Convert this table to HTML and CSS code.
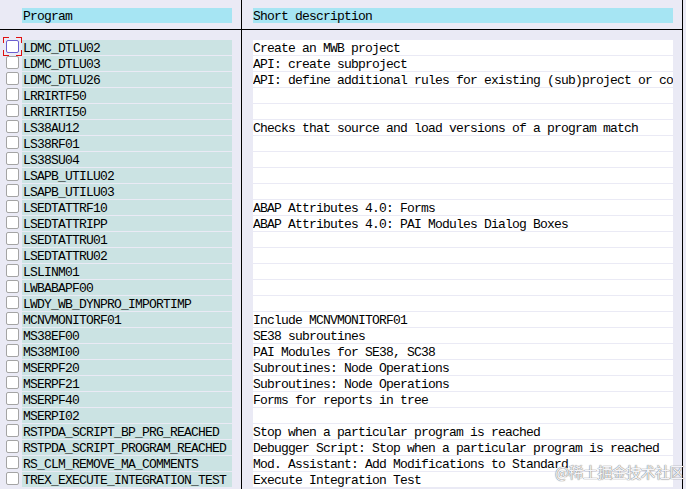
FILE: index.html
```html
<!DOCTYPE html>
<html>
<head>
<meta charset="utf-8">
<link rel="stylesheet" href="styles.css">
</head>
<body>
<div class="table">
  <div class="col col-prog">
    <div class="head"><div class="head-cell">Program</div></div>
    <div class="rows">
      <div class="row"><span class="cb focus"><span class="box"></span></span><span class="pcell">LDMC_DTLU02</span></div>
      <div class="row"><span class="cb"><span class="box"></span></span><span class="pcell">LDMC_DTLU03</span></div>
      <div class="row"><span class="cb"><span class="box"></span></span><span class="pcell">LDMC_DTLU26</span></div>
      <div class="row"><span class="cb"><span class="box"></span></span><span class="pcell">LRRIRTF50</span></div>
      <div class="row"><span class="cb"><span class="box"></span></span><span class="pcell">LRRIRTI50</span></div>
      <div class="row"><span class="cb"><span class="box"></span></span><span class="pcell">LS38AU12</span></div>
      <div class="row"><span class="cb"><span class="box"></span></span><span class="pcell">LS38RF01</span></div>
      <div class="row"><span class="cb"><span class="box"></span></span><span class="pcell">LS38SU04</span></div>
      <div class="row"><span class="cb"><span class="box"></span></span><span class="pcell">LSAPB_UTILU02</span></div>
      <div class="row"><span class="cb"><span class="box"></span></span><span class="pcell">LSAPB_UTILU03</span></div>
      <div class="row"><span class="cb"><span class="box"></span></span><span class="pcell">LSEDTATTRF10</span></div>
      <div class="row"><span class="cb"><span class="box"></span></span><span class="pcell">LSEDTATTRIPP</span></div>
      <div class="row"><span class="cb"><span class="box"></span></span><span class="pcell">LSEDTATTRU01</span></div>
      <div class="row"><span class="cb"><span class="box"></span></span><span class="pcell">LSEDTATTRU02</span></div>
      <div class="row"><span class="cb"><span class="box"></span></span><span class="pcell">LSLINM01</span></div>
      <div class="row"><span class="cb"><span class="box"></span></span><span class="pcell">LWBABAPF00</span></div>
      <div class="row"><span class="cb"><span class="box"></span></span><span class="pcell">LWDY_WB_DYNPRO_IMPORTIMP</span></div>
      <div class="row"><span class="cb"><span class="box"></span></span><span class="pcell">MCNVMONITORF01</span></div>
      <div class="row"><span class="cb"><span class="box"></span></span><span class="pcell">MS38EF00</span></div>
      <div class="row"><span class="cb"><span class="box"></span></span><span class="pcell">MS38MI00</span></div>
      <div class="row"><span class="cb"><span class="box"></span></span><span class="pcell">MSERPF20</span></div>
      <div class="row"><span class="cb"><span class="box"></span></span><span class="pcell">MSERPF21</span></div>
      <div class="row"><span class="cb"><span class="box"></span></span><span class="pcell">MSERPF40</span></div>
      <div class="row"><span class="cb"><span class="box"></span></span><span class="pcell">MSERPI02</span></div>
      <div class="row"><span class="cb"><span class="box"></span></span><span class="pcell">RSTPDA_SCRIPT_BP_PRG_REACHED</span></div>
      <div class="row"><span class="cb"><span class="box"></span></span><span class="pcell">RSTPDA_SCRIPT_PROGRAM_REACHED</span></div>
      <div class="row"><span class="cb"><span class="box"></span></span><span class="pcell">RS_CLM_REMOVE_MA_COMMENTS</span></div>
      <div class="row"><span class="cb"><span class="box"></span></span><span class="pcell">TREX_EXECUTE_INTEGRATION_TEST</span></div>
    </div>
  </div>
  <div class="col col-desc">
    <div class="head"><div class="head-cell">Short description</div></div>
    <div class="rows">
      <div class="drow">Create an MWB project</div>
      <div class="drow">API: create subproject</div>
      <div class="drow">API: define additional rules for existing (sub)project or collection</div>
      <div class="drow"></div>
      <div class="drow"></div>
      <div class="drow">Checks that source and load versions of a program match</div>
      <div class="drow"></div>
      <div class="drow"></div>
      <div class="drow"></div>
      <div class="drow"></div>
      <div class="drow">ABAP Attributes 4.0: Forms</div>
      <div class="drow">ABAP Attributes 4.0: PAI Modules Dialog Boxes</div>
      <div class="drow"></div>
      <div class="drow"></div>
      <div class="drow"></div>
      <div class="drow"></div>
      <div class="drow"></div>
      <div class="drow">Include MCNVMONITORF01</div>
      <div class="drow">SE38 subroutines</div>
      <div class="drow">PAI Modules for SE38, SC38</div>
      <div class="drow">Subroutines: Node Operations</div>
      <div class="drow">Subroutines: Node Operations</div>
      <div class="drow">Forms for reports in tree</div>
      <div class="drow"></div>
      <div class="drow">Stop when a particular program is reached</div>
      <div class="drow">Debugger Script: Stop when a particular program is reached</div>
      <div class="drow">Mod. Assistant: Add Modifications to Standard</div>
      <div class="drow">Execute Integration Test</div>
    </div>
  </div>
</div>
<div class="watermark">@稀土掘金技术社区</div>
</body>
</html>
```
FILE: styles.css
```css
html, body {
  margin: 0;
  padding: 0;
  height: 489px;
  overflow: hidden;
  background: #eaeaf5;
}
body {
  font-family: "Liberation Mono", "DejaVu Sans Mono", monospace;
  font-size: 13px;
  letter-spacing: -0.8px;
  color: #000;
  position: relative;
}
.table {
  display: grid;
  grid-template-columns: 242px 441px;
  height: 489px;
}
.col {
  border-right: 1px solid #000;
  box-sizing: border-box;
}
.head {
  border-bottom: 1px solid #000;
  padding-top: 8px;
  height: 21px;
}
.head-cell {
  height: 15px;
  line-height: 17px;
  background: #a6e5f3;
  white-space: nowrap;
  overflow: hidden;
}
.col-prog .head-cell {
  margin-left: 22px;
  width: 210px;
  padding-left: 1px;
  box-sizing: border-box;
}
.col-desc .head-cell {
  margin-left: 11px;
  width: 420px;
}
.rows {
  padding-top: 10px;
  display: flex;
  flex-direction: column;
  gap: 1px;
}
.row {
  display: grid;
  grid-template-columns: 22px 210px;
  height: 15px;
}
.cb {
  position: relative;
  display: block;
}
.box {
  display: block;
  width: 13px;
  height: 13px;
  margin-left: 6px;
  box-sizing: border-box;
  border: 1px solid #a4a4a4;
  border-radius: 2px;
  background: #fff;
}
.focus .box {
  border-color: #6b5fd0;
}
.focus::before {
  content: "";
  position: absolute;
  left: 3px;
  top: -3px;
  width: 19px;
  height: 19px;
  box-sizing: border-box;
  border: 1px solid #e01010;
  -webkit-mask:
    linear-gradient(#000,#000) left top / 6px 6px no-repeat,
    linear-gradient(#000,#000) right top / 6px 6px no-repeat,
    linear-gradient(#000,#000) left bottom / 6px 6px no-repeat,
    linear-gradient(#000,#000) right bottom / 6px 6px no-repeat;
  mask:
    linear-gradient(#000,#000) left top / 6px 6px no-repeat,
    linear-gradient(#000,#000) right top / 6px 6px no-repeat,
    linear-gradient(#000,#000) left bottom / 6px 6px no-repeat,
    linear-gradient(#000,#000) right bottom / 6px 6px no-repeat;
}
.pcell {
  display: block;
  height: 15px;
  line-height: 17px;
  background: #cbe3e3;
  padding-left: 1px;
  white-space: nowrap;
  overflow: hidden;
}
.drow {
  height: 15px;
  line-height: 17px;
  margin-left: 11px;
  width: 420px;
  background: #fff;
  white-space: nowrap;
  overflow: hidden;
}
.watermark {
  position: absolute;
  left: 555px;
  top: 461px;
  font-family: "Noto Sans CJK SC", sans-serif;
  font-size: 15px;
  letter-spacing: -0.6px;
  line-height: 22px;
  color: #f4f4f8;
  text-shadow: 0 0 1px #777, 0 0 1px #777;
  white-space: nowrap;
}
```
